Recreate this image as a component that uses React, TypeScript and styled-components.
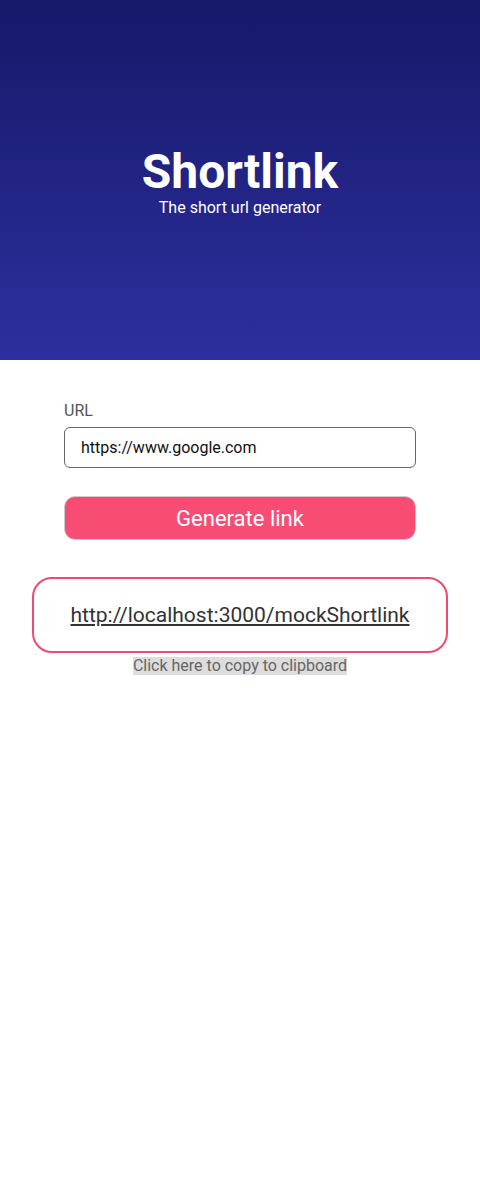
import React from "react";
import styled, { createGlobalStyle } from "styled-components";

const Global = createGlobalStyle`
  html, body { margin: 0; padding: 0; background: #fff; }
  body { font-family: Roboto, "Liberation Sans", sans-serif; }
  * { box-sizing: border-box; }
`;

const Header = styled.header`
  height: 360px;
  background: linear-gradient(180deg, #161869 0%, #2e2f9e 100%);
  display: flex;
  flex-direction: column;
  align-items: center;
  justify-content: center;
  color: #fff;
  padding-top: 4px;
`;

const Title = styled.h1`
  margin: 0;
  font-size: 48px;
  font-weight: 700;
  line-height: 52px;
`;

const Subtitle = styled.p`
  margin: 0;
  font-size: 16px;
  line-height: 20px;
`;

const Main = styled.main`
  display: flex;
  flex-direction: column;
  align-items: center;
  padding: 40px 32px 0;
`;

const Form = styled.form`
  width: 352px;
  display: flex;
  flex-direction: column;
`;

const Label = styled.label`
  font-size: 16px;
  color: #555;
  line-height: 20px;
  margin-top: 1px;
  margin-bottom: 6px;
`;

const Input = styled.input`
  height: 41px;
  border: 1px solid #666;
  border-radius: 6px;
  padding: 0 16px;
  font-family: inherit;
  font-size: 16px;
  color: #111;
  outline: none;
`;

const Button = styled.button`
  margin-top: 28px;
  height: 44px;
  border: 1px solid #ccc;
  border-radius: 11px;
  background: #f74d74;
  color: #fff;
  font-family: inherit;
  font-size: 22px;
  cursor: pointer;
`;

const ResultBox = styled.div`
  margin-top: 37px;
  width: 416px;
  height: 76px;
  border: 2px solid #f04a70;
  border-radius: 20px;
  display: flex;
  align-items: center;
  justify-content: center;
`;

const Link = styled.a`
  font-size: 21px;
  color: #333;
  text-decoration: underline;
`;

const Copy = styled.span`
  margin-top: 4px;
  font-size: 16px;
  line-height: 18px;
  color: #666;
  background: #ddd;
`;

export default function App() {
  return (
    <>
      <Global />
      <Header>
        <Title>Shortlink</Title>
        <Subtitle>The short url generator</Subtitle>
      </Header>
      <Main>
        <Form onSubmit={(e) => e.preventDefault()}>
          <Label htmlFor="url">URL</Label>
          <Input id="url" defaultValue="https://www.google.com" />
          <Button type="submit">Generate link</Button>
        </Form>
        <ResultBox>
          <Link href="#">http://localhost:3000/mockShortlink</Link>
        </ResultBox>
        <Copy>Click here to copy to clipboard</Copy>
      </Main>
    </>
  );
}
